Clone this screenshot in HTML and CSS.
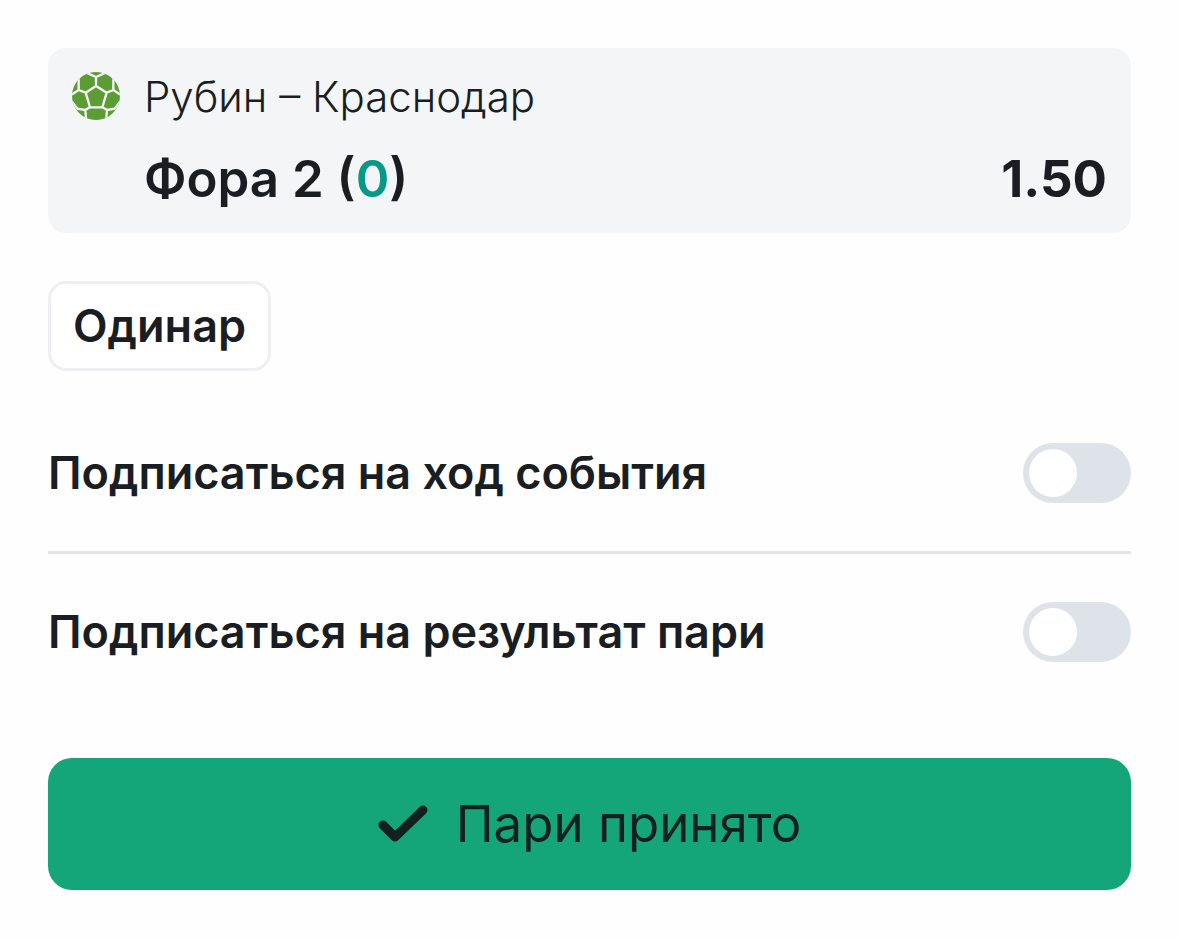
FILE: index.html
```
<!DOCTYPE html>
<html lang="ru">

<head>
    <meta charset="UTF-8">
    <meta name="viewport" content="width=device-width, initial-scale=1.0">
    <title>Пари принято</title>
    <link rel="stylesheet" href="styles.css">
</head>

<body>
    <main class="coupon">
        <section class="bet-card">
            <svg class="bet-icon" viewBox="0 0 144 144" aria-hidden="true">
                <clipPath id="ball">
                    <circle cx="72" cy="72" r="72" />
                </clipPath>
                <g clip-path="url(#ball)">
                    <rect width="144" height="144" fill="#5b9c33" />
                    <path d="M34 -2L72 15L110 -2M72 15V42M72 42L41 62L54 106H91L104 62ZM41 62L20 54V20L10 8M20 54L-4 70M104 62L124 54V20L134 8M124 54L148 70M54 106L40 114L43 148M40 114L16 110L-4 84M91 106L105 114L102 148M105 114L128 110L148 84"
                        fill="none" stroke="#f3f5f7" stroke-width="7" />
                </g>
            </svg>
            <div class="bet-info">
                <div class="bet-event">Рубин – Краснодар</div>
                <div class="bet-line">
                    <span>Фора 2 (<span class="bet-param">0</span>)</span>
                    <span class="bet-odds">1.50</span>
                </div>
            </div>
        </section>

        <button type="button" class="bet-type">Одинар</button>

        <div class="subscriptions">
            <div class="subscription">
                <label for="subEvent">Подписаться на ход события</label>
                <input type="checkbox" id="subEvent" class="toggle">
            </div>
            <div class="subscription">
                <label for="subResult">Подписаться на результат пари</label>
                <input type="checkbox" id="subResult" class="toggle">
            </div>
        </div>

        <button type="button" class="accepted">
            <svg class="accepted-icon" viewBox="0 0 50 38" aria-hidden="true">
                <path d="M5 20L17 32L45 5" fill="none" stroke="#10211f" stroke-width="9" stroke-linecap="round" stroke-linejoin="round" />
            </svg>
            Пари принято
        </button>
    </main>
</body>

</html>
```
FILE: styles.css
```
* {
    box-sizing: border-box;
}

body {
    margin: 0;
    background-color: #fefefe;
    color: #1a1e22;
    font-family: Inter, "Open Sans", sans-serif;
}

button {
    color: inherit;
    font-family: inherit;
    cursor: pointer;
}

.coupon {
    display: flex;
    flex-direction: column;
    padding: 48px;
}

.bet-card {
    display: flex;
    gap: 24px;
    padding: 24px;
    border-radius: 18px;
    background-color: #f3f5f7;
}

.bet-icon {
    flex: none;
    width: 48px;
    height: 48px;
}

.bet-info {
    flex: 1;
}

.bet-event {
    font-size: 42px;
    font-weight: 300;
    line-height: 49px;
}

.bet-line {
    display: flex;
    justify-content: space-between;
    margin-top: 28px;
    font-size: 51px;
    font-weight: 600;
    line-height: 60px;
}

.bet-param {
    color: #059a85;
}

.bet-odds {
    font-weight: 700;
}

.bet-type {
    align-self: flex-start;
    margin-top: 48px;
    padding: 18px 22px;
    border: 3px solid #eeeff2;
    border-radius: 18px;
    background-color: #fff;
    font-size: 45px;
    font-weight: 600;
    line-height: 48px;
}

.subscriptions {
    margin-top: 24px;
}

.subscription {
    display: flex;
    justify-content: space-between;
    align-items: center;
    padding: 48px 0;
    font-size: 45px;
    font-weight: 600;
    line-height: 60px;
}

.subscription + .subscription {
    border-top: 3px solid #e3e5e8;
}

.toggle {
    appearance: none;
    flex: none;
    width: 108px;
    height: 60px;
    margin: 0;
    padding: 6px;
    border-radius: 30px;
    background-color: #dee3ea;
    cursor: pointer;
}

.toggle::before {
    content: "";
    display: block;
    width: 48px;
    height: 48px;
    border-radius: 50%;
    background-color: #fff;
}

.toggle:checked {
    background-color: #14a679;
}

.toggle:checked::before {
    margin-left: auto;
}

.accepted {
    display: flex;
    justify-content: center;
    align-items: center;
    gap: 28px;
    margin-top: 48px;
    padding: 36px;
    border: none;
    border-radius: 24px;
    background-color: #14a679;
    color: #10211f;
    font-size: 51px;
    line-height: 60px;
}

.accepted-icon {
    width: 50px;
    height: 38px;
}
```
